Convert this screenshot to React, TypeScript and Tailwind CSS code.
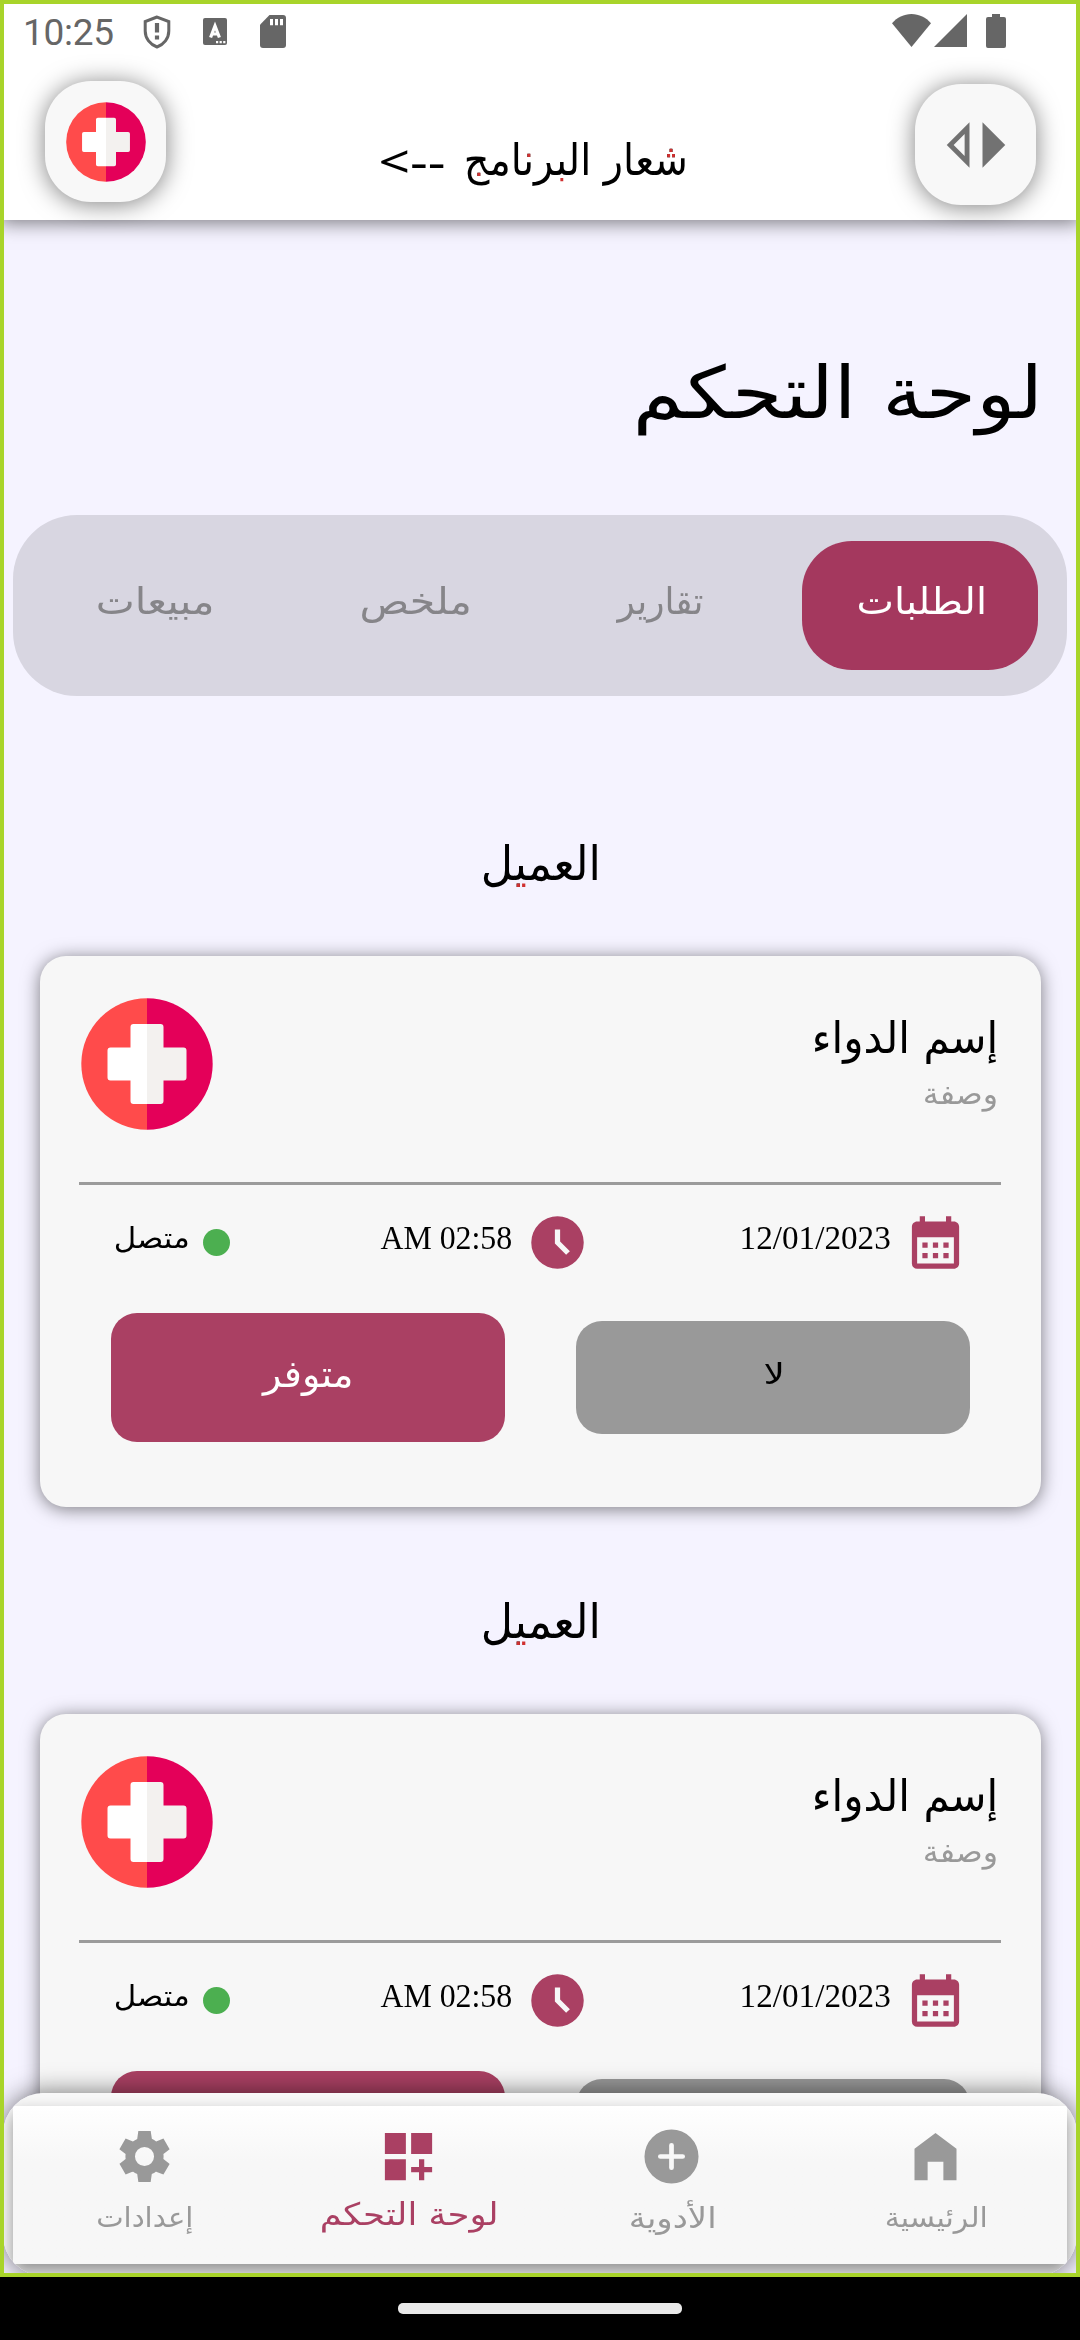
import React from 'react';

type IconProps = { className?: string };

const Logo = ({ className = '' }: IconProps) => (
  <svg viewBox="0 0 132 132" className={className}>
    <path d="M66 .3a65.7 65.7 0 0 0 0 131.4z" fill="#ff4b4b" />
    <path d="M66 .3a65.7 65.7 0 0 1 0 131.4z" fill="#e40059" />
    <path d="M66 26H52.500a3 3 0 0 0-3 3v20.500H29.500a3 3 0 0 0-3 3v27a3 3 0 0 0 3 3h20v20.500a3 3 0 0 0 3 3H66z" fill="#fff" />
    <path d="M66 26h13.500a3 3 0 0 1 3 3v20.500h20a3 3 0 0 1 3 3v27a3 3 0 0 1-3 3h-20v20.500a3 3 0 0 1-3 3H66z" fill="#f3f1ef" />
  </svg>
);

const paths = {
  swap: 'M8.500 8.620v6.760L5.120 12 8.500 8.620M10 5l-7 7 7 7V5zm4 0v14l7-7-7-7z',
  calendar:
    'M19 4h-1V2h-2v2H8V2H6v2H5c-1.110 0-1.990.9-1.990 2L3 20a2 2 0 0 0 2 2h14c1.100 0 2-.9 2-2V6c0-1.100-.9-2-2-2zm0 16H5V10h14v10zM9 14H7v-2h2v2zm4 0h-2v-2h2v2zm4 0h-2v-2h2v2zm-8 4H7v-2h2v2zm4 0h-2v-2h2v2zm4 0h-2v-2h2v2z',
  clock:
    'M12 2a10 10 0 1 0 0 20 10 10 0 0 0 0-20zM15.290 16.710L11 12.410V7h2v4.590l3.710 3.710-1.420 1.410z',
  settings:
    'M19.440 12.990l-.01.02c.04-.33.08-.67.08-1.010 0-.34-.03-.66-.07-.99l.01.02 2.440-1.920-2.430-4.220-2.870 1.160.01.01c-.52-.4-1.090-.74-1.710-1h.01L14.440 2H9.570l-.44 3.070h.01c-.62.26-1.190.6-1.710 1l.01-.01-2.880-1.170-2.440 4.220 2.440 1.920.01-.02c-.04.33-.07.65-.07.99 0 .34.03.68.08 1.010l-.01-.02-2.100 1.650-.33.26 2.430 4.200 2.880-1.150-.02-.04c.53.41 1.100.75 1.730 1.010h-.03L9.580 22h4.850s.03-.18.06-.42l.38-2.650h-.01c.62-.26 1.200-.6 1.730-1.010l-.02.04 2.880 1.150 2.430-4.200s-.14-.12-.33-.26l-2.110-1.660zM12 15.750a3.750 3.750 0 1 1 0-7.500 3.750 3.750 0 0 1 0 7.500z',
  dashboard: 'M3 3h8v8H3zM13 3h8v8h-8zM3 13h8v8H3zM18 13h-2v3h-3v2h3v3h2v-3h3v-2h-3z',
  add: 'M12 1.700a10.300 10.300 0 1 0 0 20.600 10.300 10.300 0 0 0 0-20.600zm4.250 11.200h-3.350v3.350a.9.9 0 0 1-1.800 0V12.900H7.750a.9.9 0 0 1 0-1.800h3.350V7.750a.9.9 0 0 1 1.800 0v3.350h3.350a.9.9 0 0 1 0 1.800z',
  home: 'M4 21V9l8-6 8 6v12h-5v-7H9v7H4z',
};

const Icon = ({ name, className = '' }: { name: keyof typeof paths; className?: string }) => (
  <svg viewBox="0 0 24 24" fill="currentColor" className={`shrink-0 ${className}`}>
    <path d={paths[name]} fillRule="evenodd" />
  </svg>
);

const StatusBar = () => (
  <div className="flex h-16 items-start pl-[23px] text-[#666]">
    <span className="mt-[11px] h-11 w-[91px] font-['Roboto'] text-[37px] leading-[44px] tracking-[-0.3px] whitespace-nowrap">10:25</span>
    <svg viewBox="0 0 28 34" className="mt-[15px] ml-[29px] h-[34px] w-7" fill="none" stroke="currentColor">
      <path d="M14 2L2.200 6.500v9.500c0 7.500 5 13.500 11.800 16 6.800-2.500 11.800-8.500 11.800-16V6.500z" strokeWidth="3" />
      <path d="M14 8v9.500M14 20.500v4" strokeWidth="4.200" />
    </svg>
    <svg viewBox="0 0 24 27" className="mt-[18px] ml-8 h-[27px] w-6">
      <rect width="24" height="27" rx="2" fill="#666" />
      <path d="M7.600 19.500L12 8l4.400 11.500M9 16h6" fill="none" stroke="#fff" strokeWidth="3.200" />
      <path d="M13 23h2.200v2.200H13zM16.600 23h2.200v2.200h-2.200zM20.200 23h2.200v2.200h-2.200z" fill="#fff" />
    </svg>
    <svg viewBox="0 0 26 33" className="mt-[15px] ml-[33px] h-[33px] w-[26px]">
      <path d="M9.500 0H23a3 3 0 0 1 3 3v27a3 3 0 0 1-3 3H3a3 3 0 0 1-3-3V9.800z" fill="#666" />
      <path d="M10 4h3v6.200h-3zM15 4h3v6.200h-3zM20 4h3v6.200h-3z" fill="#fff" />
    </svg>
    <svg viewBox="0 0 39 33" className="mt-[14px] ml-[606px] h-[33px] w-[39px]" fill="currentColor">
      <path d="M19.500 33L0 9.200C5 3.500 12 0 19.500 0S34 3.500 39 9.200z" />
    </svg>
    <svg viewBox="0 0 33 33" className="mt-[14px] ml-[3px] h-[33px] w-[33px]" fill="currentColor">
      <path d="M33 0v33H0z" />
    </svg>
    <svg viewBox="0 0 20 34" className="mt-[14px] ml-[19px] h-[34px] w-5" fill="currentColor">
      <path d="M6 0h8v3h4a2 2 0 0 1 2 2v27a2 2 0 0 1-2 2H2a2 2 0 0 1-2-2V5a2 2 0 0 1 2-2h4z" />
    </svg>
  </div>
);

const headerButton =
  'flex h-[121px] w-[121px] items-center justify-center rounded-[46px] bg-[#f8f8f8] shadow-[0_2px_24px_rgba(0,0,0,0.5)]';

const Header = () => (
  <header className="relative h-[220px] shrink-0 bg-white shadow-[0_3px_18px_rgba(0,0,0,0.5)]">
    <StatusBar />
    <div className="flex items-start justify-between pr-11 pl-[45px]">
      <button className={`mt-[17px] ${headerButton}`}>
        <Logo className="size-[80px]" />
      </button>
      <h2 dir="rtl" className="mt-[52px] mr-[18px] flex h-[88px] w-[306px] items-center justify-between leading-[88px] whitespace-nowrap">
        <span className="flex w-[217px] justify-center font-['DejaVu_Sans',sans-serif] text-[44px]">
          {/* black lettering with red i'jam dots, painted through the glyphs */}
          <span className="block shrink-0 scale-x-[0.905] bg-black bg-[image:radial-gradient(circle_at_5.2em_0.8em,#d03030_0.065em,transparent_0.065em),radial-gradient(circle_at_5.14em_0.916em,#d03030_0.065em,transparent_0.065em),radial-gradient(circle_at_5.265em_0.916em,#d03030_0.065em,transparent_0.065em),radial-gradient(circle_at_1.63em_0.886em,#d03030_0.07em,transparent_0.07em),radial-gradient(circle_at_0.38em_1.326em,#d03030_0.07em,transparent_0.07em),radial-gradient(circle_at_2.46em_1.446em,#d03030_0.07em,transparent_0.07em)] bg-clip-text leading-[2em] text-transparent">شعار البرنامج</span>
        </span>
        <span className="flex w-[66px] justify-center font-['Noto_Sans',sans-serif] text-[46px]">
          <span className="scale-x-[1.2]">--&gt;</span>
        </span>
      </h2>
      <button className={`mt-5 text-[#727272] ${headerButton}`}>
        <Icon name="swap" className="size-[78px]" />
      </button>
    </div>
  </header>
);

const tabs = [
  { label: 'مبيعات', cell: 'w-[260px] pl-6', text: 'scale-x-[1.12] text-[#868589]' },
  { label: 'ملخص', cell: 'w-[260px] pl-[26px]', text: 'scale-x-[1.11] text-[#868589]' },
  { label: 'تقارير', cell: 'w-[256px] pr-px', text: 'scale-x-[0.966] text-[#868589]' },
];

const Tabs = () => (
  <nav className="mx-[13px] mt-[72px] flex h-[181px] items-center rounded-[64px] bg-[#d8d6e1] font-['DejaVu_Sans',sans-serif] text-[37px]">
    {tabs.map((t) => (
      <div key={t.label} className={`flex h-[129px] items-center justify-center pb-[7px] ${t.cell}`}>
        <span className={t.text}>{t.label}</span>
      </div>
    ))}
    <div className="ml-[13px] flex h-[129px] w-[236px] items-center justify-center rounded-[50px] bg-[#a4385e] pb-[7px] pl-1 text-white">
      <span className="scale-x-[1.075]">الطلبات</span>
    </div>
  </nav>
);

const OrderCard = () => (
  <article className="ml-10 h-[551px] w-[1001px] shrink-0 rounded-[26px] bg-[#f7f7f7] font-['DejaVu_Sans',sans-serif] text-black shadow-[0_2px_18px_rgba(0,0,0,0.5)]">
    <div className="flex h-[226px] items-start justify-between pt-[42px] pr-[43px] pl-[41px]">
      <Logo className="size-[132px]" />
      <div className="flex flex-col items-end pt-[10px]">
        <span className="origin-right scale-x-[0.955] text-[44px] leading-[60px] whitespace-nowrap">إسم الدواء</span>
        <span className="origin-right scale-x-[1.06] pt-[5px] text-[30px] leading-[42px] text-[#999]">وصفة</span>
      </div>
    </div>
    <hr className="mr-10 ml-[39px] h-[3px] border-0 bg-[#9b9b9b]" />
    <div className="flex h-[114px] items-center justify-between pr-[74px] pl-[76px]">
      <div className="flex items-center gap-[15px]">
        <span className="flex w-[72px] justify-center pb-[7px] text-[29px]">
          <span className="scale-x-[1.065]">متصل</span>
        </span>
        <span className="size-[27px] rounded-full bg-[#4caf50]" />
      </div>
      <div className="mr-px flex items-center gap-[14px]">
        <span className="flex w-[131px] justify-center pb-[7px] font-['Liberation_Serif',serif] text-[33px] whitespace-nowrap">
          <span className="scale-x-[0.965]">AM 02:58</span>
        </span>
        <Icon name="clock" className="size-[63px] text-[#aa4063]" />
      </div>
      <div className="flex items-center gap-[14px]">
        <span className="flex w-[150px] justify-center pb-[7px] font-['Liberation_Serif',serif] text-[33px]">
          <span className="scale-x-[1.005]">12/01/2023</span>
        </span>
        <Icon name="calendar" className="size-[63px] text-[#aa4063]" />
      </div>
    </div>
    <div className="flex h-[157px] items-center justify-between pr-[71px] pl-[71px]">
      <button className="flex h-[129px] w-[394px] items-center justify-center rounded-[26px] bg-[#aa4063] pb-[6px] text-[37px] text-white">
        <span className="scale-x-[1.025]">متوفر</span>
      </button>
      <button className="flex h-[113px] w-[394px] items-center justify-center rounded-[26px] bg-[#999] pb-[6px] pl-[3px] text-[29px]">
        <span className="scale-x-[1.3]">لا</span>
      </button>
    </div>
  </article>
);

const ClientTitle = ({ className = '' }: { className?: string }) => (
  <h3 className={`flex h-20 shrink-0 items-center justify-center pl-[2px] font-['DejaVu_Sans',sans-serif] text-[48px] ${className}`}>
    <span className="block scale-x-[0.925] bg-black bg-[image:radial-gradient(circle_at_0.84em_1.446em,#d03030_0.07em,transparent_0.07em),radial-gradient(circle_at_0.96em_1.446em,#d03030_0.07em,transparent_0.07em)] bg-clip-text leading-[2em] text-transparent">العميل</span>
  </h3>
);

const navItems = [
  { icon: 'settings', label: 'إعدادات', color: 'text-[#999]', size: 'size-[61px] my-px', text: 'text-[28px] scale-x-[1.04] mt-[15px]' },
  { icon: 'dashboard', label: 'لوحة التحكم', color: 'text-[#aa4063]', size: 'size-[63px]', text: 'text-[31px] scale-x-[1.145] mt-[11px] pl-px' },
  { icon: 'add', label: 'الأدوية', color: 'text-[#999]', size: 'size-[63px]', text: 'text-[29px] scale-x-[1.17] mt-[15px] pl-px' },
  { icon: 'home', label: 'الرئيسية', color: 'text-[#999]', size: 'size-[63px]', text: 'text-[28px] scale-x-[1.07] mt-[15px] pl-px' },
] as const;

const BottomNav = () => (
  <nav className="absolute inset-x-[3px] top-[2093px] h-[183px] overflow-hidden rounded-[41px] bg-[#f8f8f8]">
    <div className="mx-[10px] mt-[13px] flex h-[158px] bg-linear-to-b from-white to-[#f7f7f7] to-35% font-['DejaVu_Sans',sans-serif] shadow-[0_8px_16px_rgba(0,0,0,0.42)]">
      {navItems.map((n) => (
        <div key={n.label} className={`flex flex-1 flex-col items-center pt-[19px] ${n.color}`}>
          <Icon name={n.icon} className={n.size} />
          <span className={`leading-[30px] whitespace-nowrap ${n.text}`}>{n.label}</span>
        </div>
      ))}
    </div>
  </nav>
);

export default function App() {
  return (
    <div className="flex h-[2340px] w-[1080px] flex-col overflow-hidden bg-black">
      <div className="relative flex h-[2277px] shrink-0 flex-col overflow-hidden bg-[#f5f3ff]">
        <Header />
        <main className="flex min-h-0 flex-1 flex-col overflow-hidden">
          <h1 className="mt-[123px] flex h-[100px] shrink-0 items-center justify-end pr-[37px] font-['DejaVu_Sans',sans-serif] text-[72px] leading-[100px] whitespace-nowrap text-black">
            <span className="origin-right scale-x-[1.13]">لوحة التحكم</span>
          </h1>
          <div className="shrink-0">
            <Tabs />
          </div>
          <ClientTitle className="mt-[127px] mb-[53px]" />
          <OrderCard />
          <ClientTitle className="mt-[74px] mb-[53px]" />
          <OrderCard />
        </main>
        <div className="absolute inset-x-[3px] top-[2093px] h-[183px] rounded-[41px] shadow-[0_0_26px_rgba(0,0,0,0.55)]" />
        <BottomNav />
        <div className="pointer-events-none absolute inset-0 border-4 border-[#a8d42a]" />
      </div>
      <div className="flex flex-1 items-center justify-center">
        <span className="h-[11px] w-[284px] rounded-[5px] bg-[#eaeaea]" />
      </div>
    </div>
  );
}
